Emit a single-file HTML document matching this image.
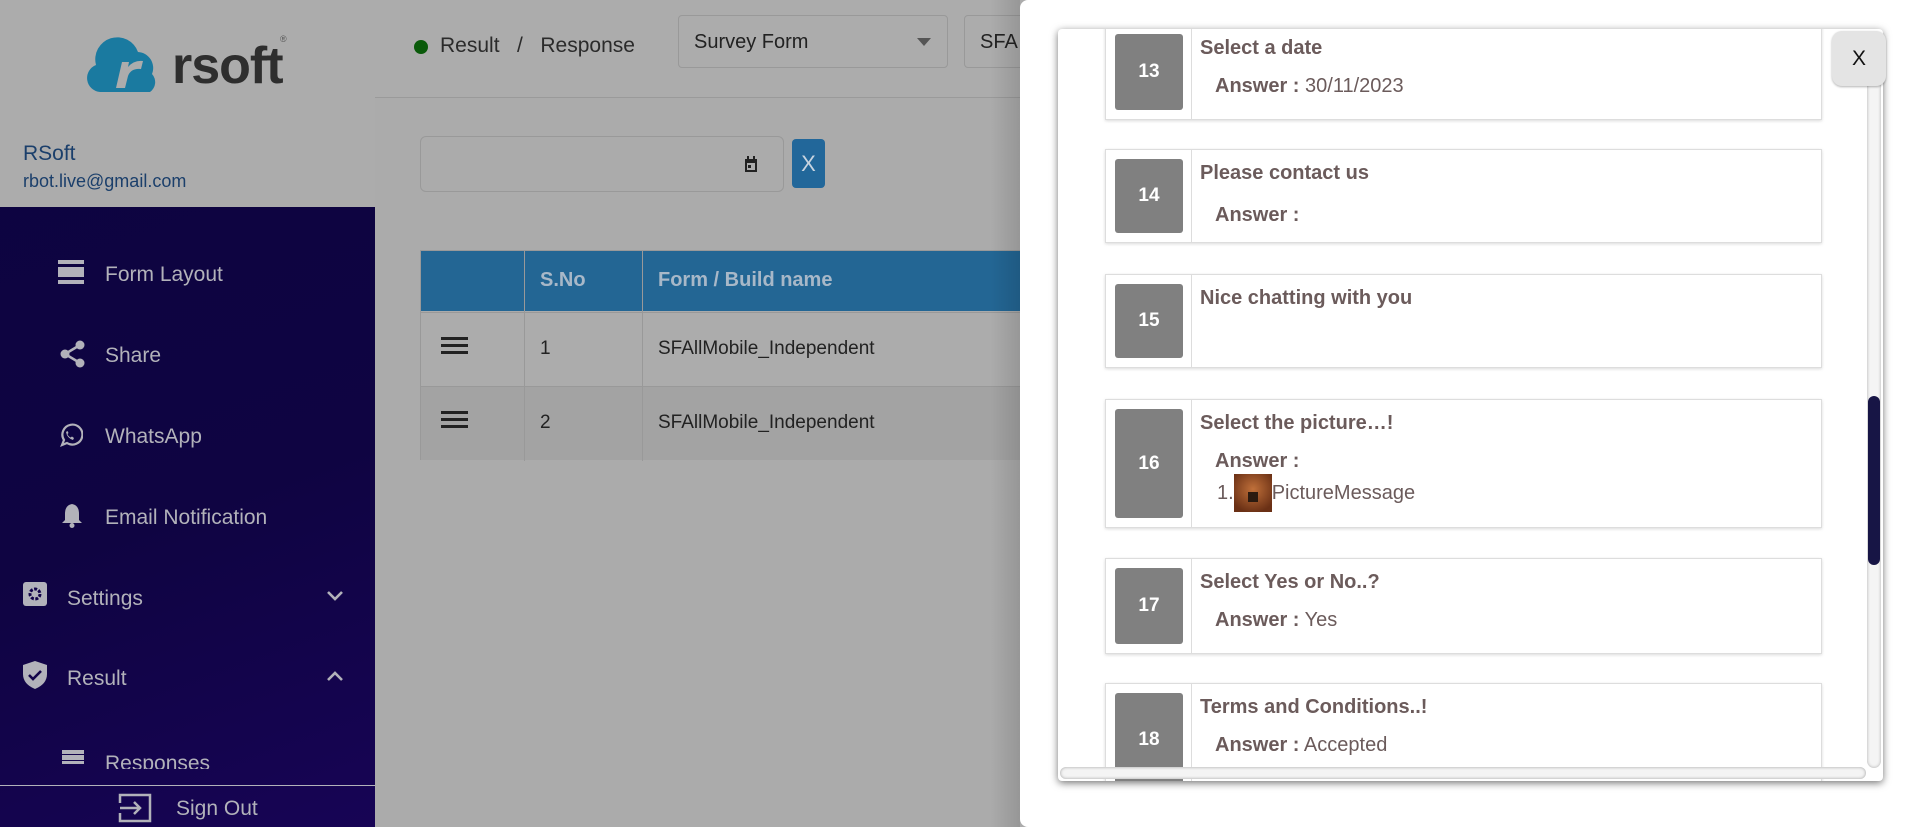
<!DOCTYPE html>
<html><head><meta charset="utf-8"><style>
*{box-sizing:border-box;margin:0;padding:0}
body{width:1920px;height:827px;overflow:hidden;position:relative;font-family:"Liberation Sans",sans-serif;background:#ababab}
.a{position:absolute}
.side{left:0;top:0;width:375px;height:827px;background:linear-gradient(160deg,#0c0340 0%,#0f0442 60%,#170455 100%)}
.sidetop{left:0;top:0;width:375px;height:207px;background:#acacac}
.mi{position:absolute;left:105px;font-size:21px;color:#b2b2ba}
.hdr{left:375px;top:0;width:1545px;height:98px;background:#acacac;border-bottom:1px solid #9a9a9a}
.card{position:absolute;left:1105px;width:717px;background:#fff;border:1px solid #ddd;box-shadow:0 1px 3px rgba(0,0,0,.15)}
.num{position:absolute;left:9px;top:9px;bottom:9px;width:68px;background:#808080;border-radius:3px;color:#fff;font-weight:bold;font-size:19px;display:flex;align-items:center;justify-content:center}
.dv{position:absolute;left:85px;top:0;bottom:0;border-left:1px solid #ddd}
.tt{position:absolute;left:94px;top:12px;font-weight:bold;font-size:20px;color:#6b5b5b}
.an{position:absolute;left:109px;top:50px;font-size:20px;color:#6b5b5b}
.an b{font-weight:bold}
</style></head><body>
<div class="a side"></div>
<div class="a sidetop"></div>
<svg class="a" style="left:86px;top:36px" width="80" height="58" viewBox="0 0 80 58"><path d="M14 56 A14 14 0 0 1 10 29 A22 22 0 0 1 52 16 A16 16 0 0 1 66 38 A12 12 0 0 1 64 56 Z" fill="#1a7aa0"/><path d="M30 52 L36 26 L43 26 L42 31 Q48 24 57 25 L55 33 Q45 32 42 40 L39 52 Z" fill="#acacac"/></svg>
<div class="a" style="left:172px;top:36px;font-size:52px;font-weight:bold;color:#2e2e2e;letter-spacing:-1px">rsoft</div>
<div class="a" style="left:280px;top:34px;font-size:9px;color:#555">®</div>
<div class="a" style="left:23px;top:142px;font-size:21px;color:#1b3f6b">RSoft</div>
<div class="a" style="left:23px;top:171px;font-size:18px;color:#1b3f6b">rbot.live@gmail.com</div>
<svg class="a" style="left:58px;top:260px" width="26" height="24"><rect x="0" y="0" width="26" height="4" fill="#b2b2ba"/><rect x="0" y="7" width="26" height="10" fill="#b2b2ba"/><rect x="0" y="20" width="26" height="4" fill="#b2b2ba"/></svg>
<div class="mi" style="top:263px">Form Layout</div>
<svg class="a" style="left:60px;top:340px" width="26" height="28"><circle cx="20" cy="5" r="4.5" fill="#b2b2ba"/><circle cx="5" cy="14" r="4.5" fill="#b2b2ba"/><circle cx="20" cy="23" r="4.5" fill="#b2b2ba"/><path d="M20 5 L5 14 L20 23" stroke="#b2b2ba" stroke-width="2.5" fill="none"/></svg>
<div class="mi" style="top:344px">Share</div>
<svg class="a" style="left:57px;top:423px" width="26" height="26"><path d="M5 22 L7 17 A10 10 0 1 1 10 20 Z" stroke="#b2b2ba" stroke-width="2.2" fill="none"/><path d="M9 9 Q10 15 16 17 L17 15 L15 13.5 L13.5 14.5 Q11 13 10.5 11 L11.5 10 L10.5 8 Z" fill="#b2b2ba"/></svg>
<div class="mi" style="top:425px">WhatsApp</div>
<svg class="a" style="left:61px;top:502px" width="22" height="26"><path d="M11 2 Q4 3 4 12 L4 18 L1 21 L21 21 L18 18 L18 12 Q18 3 11 2Z" fill="#b2b2ba"/><circle cx="11" cy="23.5" r="2.5" fill="#b2b2ba"/></svg>
<div class="mi" style="top:506px">Email Notification</div>
<svg class="a" style="left:23px;top:582px" width="24" height="24"><rect x="0" y="0" width="24" height="24" rx="3" fill="#b2b2ba"/><circle cx="12" cy="12" r="5" fill="none" stroke="#13044a" stroke-width="3" stroke-dasharray="3 1.5"/></svg>
<div class="mi" style="left:67px;top:587px">Settings</div>
<svg class="a" style="left:326px;top:590px" width="18" height="12"><path d="M2 2 L9 9 L16 2" stroke="#b2b2ba" stroke-width="2.6" fill="none"/></svg>
<svg class="a" style="left:22px;top:660px" width="26" height="30"><path d="M13 1 L25 5 L25 14 Q25 24 13 29 Q1 24 1 14 L1 5Z" fill="#b2b2ba"/><path d="M7 15 L11 19 L19 11" stroke="#13044a" stroke-width="2.6" fill="none"/></svg>
<div class="mi" style="left:67px;top:667px">Result</div>
<svg class="a" style="left:326px;top:670px" width="18" height="12"><path d="M2 10 L9 3 L16 10" stroke="#b2b2ba" stroke-width="2.6" fill="none"/></svg>
<div class="a" style="left:0;top:740px;width:375px;height:29px;overflow:hidden">
<svg class="a" style="left:62px;top:10px" width="22" height="14"><rect width="22" height="4" fill="#b2b2ba"/><rect y="5" width="22" height="5" fill="#b2b2ba"/><rect y="11" width="22" height="3" fill="#b2b2ba"/></svg>
<div class="mi" style="top:12px">Responses</div></div>
<div class="a" style="left:0;top:785px;width:375px;border-top:1px solid #b2b2ba"></div>
<svg class="a" style="left:118px;top:793px" width="34" height="30"><path d="M8 2 L32 2 L32 28 L8 28 M8 2 L2 2 L2 10 M2 20 L2 28 L8 28" stroke="#b2b2ba" stroke-width="2.5" fill="none"/><path d="M2 15 L22 15 M16 9 L22 15 L16 21" stroke="#b2b2ba" stroke-width="2.5" fill="none"/></svg>
<div class="mi" style="left:176px;top:797px">Sign Out</div>
<div class="a hdr"></div>
<div class="a" style="left:414px;top:40px;width:14px;height:14px;border-radius:50%;background:#0a5a0a"></div>
<div class="a" style="left:440px;top:34px;font-size:21px;color:#2b2b2b">Result &nbsp; / &nbsp; Response</div>
<div class="a" style="left:678px;top:15px;width:270px;height:53px;border:1px solid #999;border-radius:4px;background:#acacac"></div>
<div class="a" style="left:694px;top:31px;font-size:20px;color:#222">Survey Form</div>
<svg class="a" style="left:917px;top:38px" width="14" height="9"><path d="M0 0 L14 0 L7 8Z" fill="#555"/></svg>
<div class="a" style="left:964px;top:15px;width:100px;height:53px;border:1px solid #999;border-radius:4px"></div>
<div class="a" style="left:980px;top:31px;font-size:20px;color:#222">SFA</div>
<div class="a" style="left:420px;top:136px;width:364px;height:56px;border:1px solid #999;border-radius:6px"></div>
<svg class="a" style="left:744px;top:156px" width="14" height="17"><rect x="1" y="3" width="12" height="13" fill="#222"/><rect x="3" y="0" width="2" height="4" fill="#222"/><rect x="9" y="0" width="2" height="4" fill="#222"/><rect x="3" y="7" width="8" height="7" fill="#acacac"/><rect x="4" y="9" width="3" height="3" fill="#222"/></svg>
<div class="a" style="left:792px;top:139px;width:33px;height:49px;background:#22679a;border-radius:4px;color:#c8d4e0;font-size:22px;display:flex;align-items:center;justify-content:center">X</div>
<div class="a" style="left:420px;top:250px;width:620px;height:210px;border:1px solid #999">
<div class="a" style="left:0;top:0;width:620px;height:60px;background:#236694"></div>
<div class="a" style="left:0;top:61px;width:620px;height:74px;background:#acacac;border-top:1px solid #999"></div>
<div class="a" style="left:0;top:135px;width:620px;height:74px;background:#a3a3a3;border-top:1px solid #999"></div>
<div class="a" style="left:103px;top:0;height:210px;border-left:1px solid #999"></div>
<div class="a" style="left:221px;top:0;height:210px;border-left:1px solid #999"></div>
<div class="a" style="left:119px;top:18px;font-size:20px;font-weight:bold;color:#a8b8c8">S.No</div>
<div class="a" style="left:237px;top:18px;font-size:20px;font-weight:bold;color:#a8b8c8">Form / Build name</div>
<svg class="a" style="left:20px;top:86px" width="27" height="18"><rect y="0" width="27" height="3" fill="#222"/><rect y="7" width="27" height="3" fill="#222"/><rect y="14" width="27" height="3" fill="#222"/></svg>
<svg class="a" style="left:20px;top:160px" width="27" height="18"><rect y="0" width="27" height="3" fill="#222"/><rect y="7" width="27" height="3" fill="#222"/><rect y="14" width="27" height="3" fill="#222"/></svg>
<div class="a" style="left:119px;top:87px;font-size:19px;color:#222">1</div>
<div class="a" style="left:119px;top:161px;font-size:19px;color:#222">2</div>
<div class="a" style="left:237px;top:87px;font-size:19px;color:#222">SFAllMobile_Independent</div>
<div class="a" style="left:237px;top:161px;font-size:19px;color:#222">SFAllMobile_Independent</div>
</div>
<div class="a" style="left:990px;top:0;width:30px;height:827px;background:linear-gradient(90deg,rgba(0,0,0,0),rgba(0,0,0,.12))"></div>
<div class="a" style="left:1020px;top:0;width:900px;height:827px;background:#fff;border-radius:8px 0 0 8px"></div>
<div class="a" style="left:1058px;top:29px;width:825px;height:752px;background:#fff;border-radius:4px;box-shadow:0 2px 8px rgba(0,0,0,.55);overflow:hidden">
<div style="position:absolute;left:-1058px;top:-29px;width:1920px;height:827px">
<div class="card" style="top:2px;height:118px"><div class="num" style="top:31px">13</div><div class="dv"></div><div class="tt" style="top:34px">Select a date</div><div class="an" style="top:72px"><b>Answer :</b> 30/11/2023</div></div>
<div class="card" style="top:149px;height:94px"><div class="num">14</div><div class="dv"></div><div class="tt">Please contact us</div><div class="an" style="top:54px"><b>Answer :</b></div></div>
<div class="card" style="top:274px;height:94px"><div class="num">15</div><div class="dv"></div><div class="tt">Nice chatting with you</div></div>
<div class="card" style="top:399px;height:129px"><div class="num">16</div><div class="dv"></div><div class="tt">Select the picture…!</div><div class="an" style="top:50px"><b>Answer :</b></div>
<div class="an" style="left:111px;top:74px;display:flex;align-items:center">1.<span style="display:inline-block;width:38px;height:38px;background:radial-gradient(circle at 50% 40%,#c0703a,#6a3015 80%);position:relative"><span style="position:absolute;left:14px;top:18px;width:10px;height:10px;background:#2a1a10"></span></span>PictureMessage</div></div>
<div class="card" style="top:558px;height:96px"><div class="num">17</div><div class="dv"></div><div class="tt">Select Yes or No..?</div><div class="an"><b>Answer :</b> Yes</div></div>
<div class="card" style="top:683px;height:130px"><div class="num" style="bottom:auto;height:94px">18</div><div class="dv"></div><div class="tt">Terms and Conditions..!</div><div class="an"><b>Answer :</b> Accepted</div></div>
</div>
<div class="a" style="left:809px;top:45px;width:14px;height:694px;border-radius:7px;background:#f4f4f4;box-shadow:inset 0 0 3px rgba(0,0,0,.3)"></div>
<div class="a" style="left:810px;top:367px;width:12px;height:169px;border-radius:6px;background:#171545"></div>
<div class="a" style="left:2px;top:738px;width:806px;height:12px;border-radius:6px;background:#f4f4f4;box-shadow:inset 0 0 3px rgba(0,0,0,.35)"></div>
</div>
<div class="a" style="left:1832px;top:31px;width:54px;height:55px;background:#e4e4e4;border-radius:10px;box-shadow:0 1px 2px rgba(0,0,0,.3);font-size:21px;color:#111;display:flex;align-items:center;justify-content:center">X</div>
</body></html>
